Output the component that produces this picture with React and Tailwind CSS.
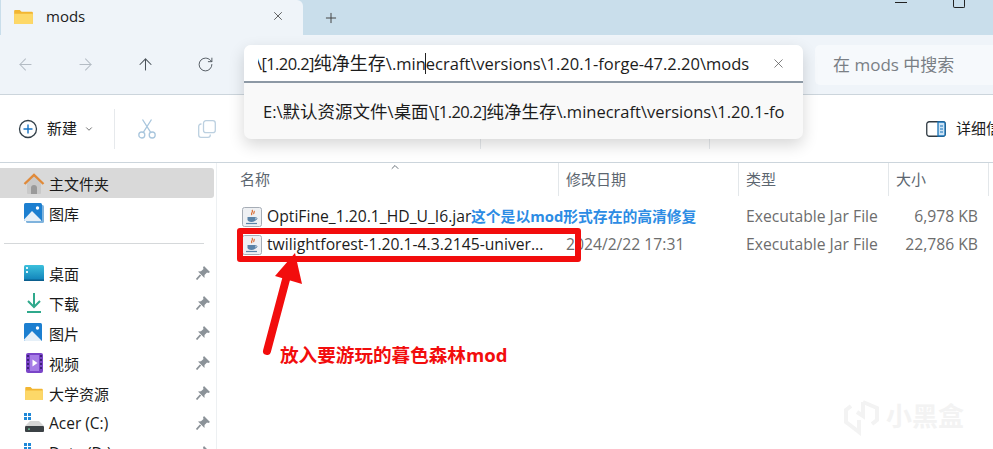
import React from "react";
import { ArrowLeft, ArrowRight, ArrowUp, RotateCw, X, Plus, ChevronDown, ChevronUp } from "lucide-react";

const Folder = ({ w = 20, h = 16 }) => (
  <svg width={w} height={h} viewBox="0 0 20 16">
    <path d="M0 2a1 1 0 0 1 1-1h5l2 2h11a1 1 0 0 1 1 1v11a1 1 0 0 1-1 1H1a1 1 0 0 1-1-1z" fill="#f2b632" />
    <path d="M0 5h19a1 1 0 0 1 1 1v9a1 1 0 0 1-1 1H1a1 1 0 0 1-1-1z" fill="#fdd868" />
  </svg>
);
const Home = () => (
  <svg width="22" height="21" viewBox="0 0 22 21">
    <path d="M4 10l7-7 7 7v10a1 1 0 0 1-1 1H5a1 1 0 0 1-1-1z" fill="#c9c9c9" />
    <path d="M8 21v-6a3 3 0 0 1 6 0v6z" fill="#9a9a9a" />
    <path d="M1.500 11L11 2l9.500 9" fill="none" stroke="#e08a3a" strokeWidth="2.400" />
  </svg>
);
const Picture = ({ stack }) => (
  <svg width="20" height="20" viewBox="0 0 20 20">
    {stack && <rect x="2" y="2" width="18" height="18" rx="1.500" fill="#7fb3dd" />}
    <rect x="0" y="0" width="18" height="18" rx="1.500" fill="#1c7fd0" />
    <circle cx="13.500" cy="5" r="1.700" fill="#fff" />
    <path d="M0 16.500L8 8l9 9v1H1.500A1.500 1.500 0 0 1 0 16.500z" fill="#e6f0f8" />
  </svg>
);
const Desktop = () => (
  <svg width="20" height="16" viewBox="0 0 20 16">
    <defs>
      <linearGradient id="dsk" x1="0" y1="0" x2="0" y2="1">
        <stop offset="0" stopColor="#3cc0dc" />
        <stop offset="1" stopColor="#0f7fb8" />
      </linearGradient>
    </defs>
    <rect width="20" height="16" rx="1.500" fill="url(#dsk)" />
    <rect x="2" y="2" width="2" height="2" fill="#dff5fa" />
    <rect x="2" y="6" width="2" height="2" fill="#dff5fa" />
    <rect x="0" y="14.500" width="20" height="1.500" fill="#0b5f8e" />
  </svg>
);
const Download = () => (
  <svg width="16" height="20" viewBox="0 0 16 20" fill="none" stroke="#2fa98c" strokeWidth="2">
    <path d="M8 0v13M2 8l6 6 6-6M1 19h14" />
  </svg>
);
const Video = () => (
  <svg width="17" height="20" viewBox="0 0 17 20">
    <rect width="17" height="20" rx="2" fill="#7a45c8" />
    <rect x="4" y="2" width="9" height="16" fill="#a67ce6" />
    <path d="M6.500 6.500l5 3.500-5 3.500z" fill="#fff" />
    {[2, 6, 10, 14].map((y) => (
      <g key={y}>
        <rect x="1.200" y={y} width="1.600" height="2" fill="#2e1a66" />
        <rect x="14.200" y={y} width="1.600" height="2" fill="#2e1a66" />
      </g>
    ))}
  </svg>
);
const Drive = () => (
  <svg width="20" height="20" viewBox="0 0 20 20">
    <rect x="0" y="0" width="3" height="3" fill="#1e88d8" />
    <rect x="4" y="0" width="3" height="3" fill="#1e88d8" />
    <rect x="0" y="4" width="3" height="3" fill="#1e88d8" />
    <rect x="4" y="4" width="3" height="3" fill="#1e88d8" />
    <path d="M1 13l5-5h9l5 5z" fill="#d6d6d6" />
    <rect x="1" y="13" width="19" height="6" rx="1" fill="#3b4145" />
    <rect x="4" y="15.500" width="2" height="1.200" fill="#6fd0a0" />
  </svg>
);
const Pin = () => (
  <svg width="14" height="14" viewBox="0 0 14 14">
    <path d="M8 0l6 6-1.500 1-1.500-.5L8.500 9l0 3L2 5.500l3-.2L7.500 3 7 1.500z" fill="#8b9298" />
    <path d="M4.500 9L0.500 13.500" stroke="#8b9298" strokeWidth="1.800" />
  </svg>
);
const Jar = () => (
  <svg width="20" height="20" viewBox="0 0 20 20">
    <rect x="0.500" y="0.500" width="19" height="19" rx="2" fill="#eef0f3" stroke="#a6adb6" />
    <path d="M10 3c2 2-2 3 0 5M12 4c1 1-1 2 0 3" fill="none" stroke="#d9682c" strokeWidth="1.200" />
    <path d="M5.500 10h8v2.500c0 1.500-1.500 2.500-4 2.500s-4-1-4-2.500z" fill="#5a83a8" />
    <path d="M13.500 10.500c2 0 2 2.500-.5 2.500" fill="none" stroke="#5a83a8" />
    <path d="M4 16.500h11" stroke="#5a83a8" strokeWidth="1.200" />
  </svg>
);
const Details = () => (
  <svg width="20" height="16" viewBox="0 0 20 16" fill="none">
    <rect x="0.750" y="0.750" width="18.500" height="14.500" rx="2.500" stroke="#2f3a42" strokeWidth="1.300" />
    <path d="M12 1h5.500A1.500 1.500 0 0 1 19 2.500v11a1.500 1.500 0 0 1-1.500 1.500H12z" fill="#cde4f6" stroke="#1873b8" strokeWidth="1.300" />
    <path d="M14 5h3M14 8h3M14 11h3" stroke="#1873b8" />
  </svg>
);
const NewIcon = () => (
  <svg width="20" height="20" viewBox="0 0 20 20" fill="none">
    <circle cx="10" cy="10" r="8.500" stroke="#33404a" strokeWidth="1.300" />
    <path d="M10 5.500v9M5.500 10h9" stroke="#1673c4" strokeWidth="1.400" />
  </svg>
);
const CopyIcon = () => (
  <svg width="18" height="18" viewBox="0 0 18 18" fill="none" stroke="#bcd0e0" strokeWidth="1.300">
    <rect x="5.500" y="0.700" width="11.800" height="12" rx="2.500" />
    <path d="M3.500 4H3a2.300 2.300 0 0 0-2.300 2.300V15A2.300 2.300 0 0 0 3 17.300h7a2.300 2.300 0 0 0 2.300-2.300v-.5" />
  </svg>
);
const ScissorsIcon = () => (
  <svg width="18" height="20" viewBox="0 0 18 20" fill="none" stroke="#a9c6dd" strokeWidth="1.300">
    <circle cx="3.800" cy="16" r="3" />
    <circle cx="14.200" cy="16" r="3" />
    <path d="M5.300 13.400L13.500 0.500M12.700 13.400L4.500 0.500" />
  </svg>
);

const C = ({ s = "text-[18px]", children }) => <span className={s}>{children}</span>;

const NavRow = ({ icon, label, pin = true, active, latin }) => (
  <div className={`h-[30px] flex items-center shrink-0 rounded-r-[3px] w-[214px] ${active ? "bg-[#d9d9d9]" : ""}`}>
    <div className="w-[24px] ml-[22px] mr-[3px] flex justify-center items-center">{icon}</div>
    <span className={`${latin ? "text-[15.500px]" : "text-[15px]"} pt-[2px] text-[#1a1a1a] flex-1 whitespace-nowrap`}>{label}</span>
    {pin && <span className="mr-[4px] flex"><Pin /></span>}
  </div>
);

const Head = ({ w, label, children }) => (
  <div className={`${w} shrink-0 h-[33px] pl-[7px] border-r border-[#e3e7ea] flex items-center text-[15px] text-[#5c6670] relative`}>
    {label}
    {children}
  </div>
);

const FileRow = ({ name, date, type, size }) => (
  <div className="flex h-[28px] items-center text-[15.700px] text-[#6d6d6d]">
    <div className="w-[342px] shrink-0 flex items-center pl-[25px]">
      <Jar />
      <span className="ml-[5px] text-[#1c1c1c] whitespace-nowrap">{name}</span>
    </div>
    <div className="w-[180px] shrink-0 pl-[7px] whitespace-nowrap">{date}</div>
    <div className="w-[150px] shrink-0 pl-[7px] whitespace-nowrap">{type}</div>
    <div className="w-[89px] shrink-0 text-right whitespace-nowrap">{size}</div>
  </div>
);

export default function App() {
  return (
    <div className="w-[993px] h-[449px] overflow-hidden relative bg-white flex flex-col font-['Open_Sans','Noto_Sans_CJK_SC',sans-serif]">
      {/* title bar */}
      <div className="h-[35px] shrink-0 bg-[#c9deeb] flex items-end relative">
        <div className="w-[302px] h-[35px] ml-[1px] pb-[3px] bg-[#eff4f9] rounded-tr-[6px] flex items-center pl-[13px]">
          <Folder w={19} h={15} />
          <span className="ml-[13px] text-[15px] text-[#1c1c1c] font-medium">mods</span>
          <X size={14} className="ml-[186px] text-[#333]" strokeWidth={1.300} />
        </div>
        <Plus size={16} className="ml-[20px] mb-[9px] text-[#444]" strokeWidth={1.500} />
        <div className="ml-auto flex items-start self-start">
          <div className="w-[12px] h-[1px] mt-[2px] bg-[#222] mr-[46px]" />
          <div className="w-[12px] h-[8px] mr-[28px] border-x border-b border-[#222] rounded-b-[2px]" />
        </div>
      </div>
      {/* navigation bar */}
      <div className="h-[60px] shrink-0 bg-[#eff4f9] border-b border-[#ccd5dc] flex items-center relative">
        <ArrowLeft size={19} className="ml-[16px] text-[#b4bcc4]" strokeWidth={1.300} />
        <ArrowRight size={19} className="ml-[41px] text-[#b4bcc4]" strokeWidth={1.300} />
        <ArrowUp size={19} className="ml-[41px] text-[#4a5259]" strokeWidth={1.300} />
        <RotateCw size={17} className="ml-[42px] text-[#4a5259]" strokeWidth={1.300} />
        <div className="ml-[601px] w-[178px] h-[40px] rounded-l-[5px] bg-[#f6f9fc] flex items-center pl-[18px] text-[17px] text-[#7a7f85] whitespace-nowrap">
          在 mods 中搜索
        </div>
      </div>
      {/* command bar */}
      <div className="h-[68px] shrink-0 border-b border-[#ccd5dc] flex items-center whitespace-nowrap">
        <span className="ml-[18px] flex shrink-0"><NewIcon /></span>
        <span className="ml-[9px] text-[15px] text-[#1c1c1c] shrink-0">新建</span>
        <ChevronDown size={10} className="ml-[7px] text-[#555] shrink-0" />
        <div className="ml-[20px] w-[1px] h-[40px] bg-[#e6e9ec] shrink-0" />
        <span className="ml-[23px] flex shrink-0"><ScissorsIcon /></span>
        <span className="ml-[42px] flex shrink-0"><CopyIcon /></span>
        <div className="ml-[264px] w-[1px] h-[20px] mt-[20px] bg-[#e6e9ec] shrink-0" />
        <div className="ml-[228px] w-[1px] h-[20px] mt-[20px] bg-[#e6e9ec] shrink-0" />
        <span className="ml-[216px] flex shrink-0"><Details /></span>
        <span className="ml-[10px] text-[15px] text-[#1c1c1c]">详细信息</span>
      </div>
      {/* body */}
      <div className="flex-1 flex min-h-0">
        <div className="w-[217px] shrink-0 border-r border-[#edf0f2] pt-[5px] flex flex-col">
          <NavRow active icon={<Home />} label="主文件夹" pin={false} />
          <NavRow icon={<Picture stack />} label="图库" pin={false} />
          <div className="h-[30px] shrink-0 flex items-center"><div className="ml-[4px] w-[200px] h-[1px] bg-[#d5d8da]" /></div>
          <NavRow icon={<Desktop />} label="桌面" />
          <NavRow icon={<Download />} label="下载" />
          <NavRow icon={<Picture />} label="图片" />
          <NavRow icon={<Video />} label="视频" />
          <NavRow icon={<Folder w={18} h={14} />} label="大学资源" />
          <NavRow latin icon={<Drive />} label="Acer (C:)" />
          <NavRow latin icon={<Drive />} label="Data (D:)" />
        </div>
        <div className="flex-1 min-w-0">
          <div className="flex">
            <Head w="w-[342px]" label={<span className="pl-[16px]">名称</span>}>
              <ChevronUp size={12} className="absolute left-[172px] top-[-2px] text-[#6a737b]" />
            </Head>
            <Head w="w-[180px]" label="修改日期" />
            <Head w="w-[150px]" label="类型" />
            <Head w="w-[100px]" label="大小" />
          </div>
          <div className="pt-[7px]">
            <FileRow name="OptiFine_1.20.1_HD_U_I6.jar" date="" type="Executable Jar File" size="6,978 KB" />
            <FileRow name="twilightforest-1.20.1-4.3.2145-univer..." date="2024/2/22 17:31" type="Executable Jar File" size="22,786 KB" />
          </div>
        </div>
      </div>

      {/* address bar popup */}
      <div className="absolute left-[244px] top-[45px] w-[559px] h-[94px] rounded-[7px] bg-[#f9f9f9] shadow-[0_6px_16px_rgba(0,0,0,0.16)] flex flex-col overflow-hidden">
        <div className="h-[38px] shrink-0 bg-white border-b-[2px] border-[#8d99a5] flex items-center relative">
          <div className="ml-[14px] overflow-hidden pt-[1px]">
            <span className="block -ml-[2px] text-[16.500px] text-[#1c1c1c] whitespace-nowrap"><span className="tracking-[-0.600px]">\[1.20.2]</span><C>纯净生存</C>\.minecraft\versions\1.20.1-forge-47.2.20\mods</span>
          </div>
          <span className="absolute left-[181px] top-[8px] w-[1px] h-[21px] bg-[#222]" />
          <X size={15} className="absolute left-[527px] top-[11px] text-[#555]" strokeWidth={1.200} />
        </div>
        <div className="flex-1 flex items-center pl-[19px] text-[16.500px] text-[#1c1c1c] whitespace-nowrap overflow-hidden">
          <span>E:\<C s="text-[17.500px]">默认资源文件</C>\<C s="text-[17.500px]">桌面</C><span className="tracking-[-0.600px]">\[1.20.2]</span><C s="text-[17.500px]">纯净生存</C>\.minecraft\versions\1.20.1-fo</span>
        </div>
      </div>

      {/* annotations */}
      <div className="absolute left-[237px] top-[228px] w-[344px] h-[34px] border-[6px] border-[#f20d0d] rounded-[3px]" />
      <span className="absolute left-[471px] top-[206px] text-[14.800px] font-bold text-[#2c8ce4] whitespace-nowrap leading-[20px]">这个是以mod形式存在的高清修复</span>
      <span className="absolute left-[280px] top-[343px] text-[18.600px] font-bold text-[#f20d0d] whitespace-nowrap leading-[24px]">放入要游玩的暮色森林mod</span>
      <svg className="absolute left-[260px] top-[248px]" width="50" height="110" viewBox="260 248 50 110">
        <path d="M267 351L288 272" stroke="#f20d0d" strokeWidth="8" strokeLinecap="round" />
        <path d="M295 253L275 276L302 284z" fill="#f20d0d" />
      </svg>

      {/* watermark */}
      <div className="absolute left-[843px] top-[396px] flex items-center">
        <svg width="38" height="40" viewBox="0 0 38 40" fill="none" stroke="#f3f3f3" strokeWidth="4">
          <path d="M8 10L3 14v12l13 10V24M20 6l14 6v12l-5 4M20 6v14l-6-4" />
        </svg>
        <span className="ml-[5px] text-[26px] leading-[30px] text-[#f3f3f3] font-bold whitespace-nowrap">小黑盒</span>
      </div>
    </div>
  );
}
